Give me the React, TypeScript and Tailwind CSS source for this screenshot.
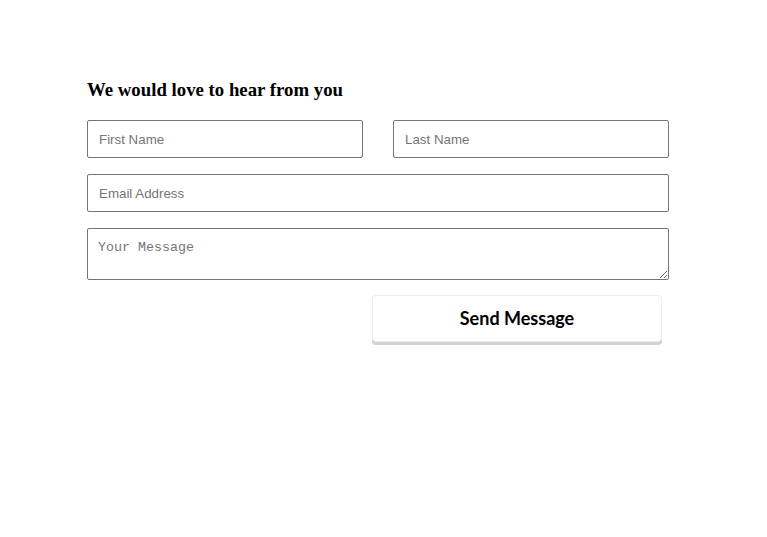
export default function App() {
  return (
    <div className="min-h-[537px] w-full bg-white">
      <form
        className="ml-[87px] w-[582px] pt-[78px]"
        onSubmit={(e) => e.preventDefault()}
      >
        <h2 className="mb-[18px] text-[18.8px] font-bold leading-[24px] text-black [font-family:'Liberation_Serif',serif]">
          We would love to hear from you
        </h2>

        <div className="flex gap-[30px]">
          <input
            type="text"
            placeholder="First Name"
            className="h-[38px] w-[276px] rounded-[2px] border border-[#767676] px-[11px] text-[13.33px] text-black placeholder:text-[#757575] [font-family:'Liberation_Sans',Arial,sans-serif] outline-none"
          />
          <input
            type="text"
            placeholder="Last Name"
            className="h-[38px] w-[276px] rounded-[2px] border border-[#767676] px-[11px] text-[13.33px] text-black placeholder:text-[#757575] [font-family:'Liberation_Sans',Arial,sans-serif] outline-none"
          />
        </div>

        <input
          type="email"
          placeholder="Email Address"
          className="mt-[16px] block h-[38px] w-full rounded-[2px] border border-[#767676] px-[11px] text-[13.33px] text-black placeholder:text-[#757575] [font-family:'Liberation_Sans',Arial,sans-serif] outline-none"
        />

        <textarea
          placeholder="Your Message"
          className="mt-[16px] block h-[52px] w-full rounded-[2px] border border-[#767676] px-[10px] pt-[11px] pb-[8px] text-[13.33px] leading-[16px] text-black placeholder:text-[#757575] [font-family:'Liberation_Mono',monospace] outline-none"
        />

        <div className="mt-[15px] flex justify-end pr-[7px]">
          <button
            type="submit"
            className="h-[47px] w-[290px] rounded-[4px] border border-[#ececec] bg-white text-[18px] font-bold text-black shadow-[0_3px_0_#d2d2d2] [font-family:Lato,sans-serif]"
          >
            Send Message
          </button>
        </div>
      </form>
    </div>
  );
}
